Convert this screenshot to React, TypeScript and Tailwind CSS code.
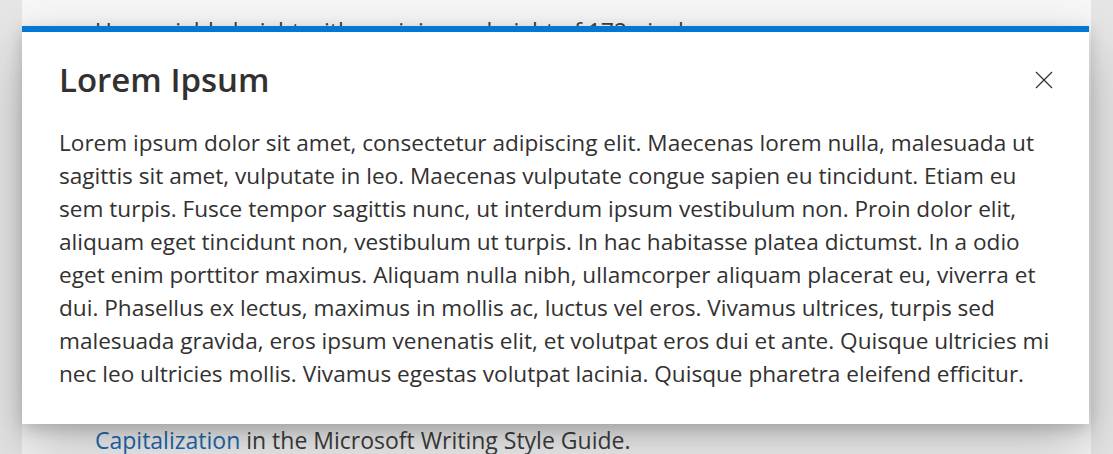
const bodyLines = [
  'Lorem ipsum dolor sit amet, consectetur adipiscing elit. Maecenas lorem nulla, malesuada ut',
  'sagittis sit amet, vulputate in leo. Maecenas vulputate congue sapien eu tincidunt. Etiam eu',
  'sem turpis. Fusce tempor sagittis nunc, ut interdum ipsum vestibulum non. Proin dolor elit,',
  'aliquam eget tincidunt non, vestibulum ut turpis. In hac habitasse platea dictumst. In a odio',
  'eget enim porttitor maximus. Aliquam nulla nibh, ullamcorper aliquam placerat eu, viverra et',
  'dui. Phasellus ex lectus, maximus in mollis ac, luctus vel eros. Vivamus ultrices, turpis sed',
  'malesuada gravida, eros ipsum venenatis elit, et volutpat eros dui et ante. Quisque ultricies mi',
  'nec leo ultricies mollis. Vivamus egestas volutpat lacinia. Quisque pharetra eleifend efficitur.',
]

const font = { fontFamily: '"Open Sans", "Noto Sans", Arial, sans-serif' }

export default function App() {
  return (
    <div className="relative w-full h-[454px] overflow-hidden bg-[#e6e6e6] flex" style={font}>
      {/* Page behind the dialog */}
      <div className="mx-[22px] flex-1 bg-[#f7f7f7] flex flex-col justify-between pl-[73px] text-[23px] text-[#3f3f3f]">
        <p className="pt-[14px] leading-[34px] whitespace-nowrap">
          Use variable height with a minimum height of 172 pixels.
        </p>
        <div className="leading-[34px] whitespace-nowrap -mb-[3px]">
          <p>Keep your copy brief and to the point, and for any typography rules, see</p>
          <p>
            <span className="text-[#1f6cb5]">Capitalization</span> in the Microsoft Writing Style Guide.
          </p>
        </div>
      </div>

      {/* Dialog */}
      <div className="absolute left-[22px] top-[26px] w-[1067px] h-[398px] bg-white border-t-[6px] border-[#0078d4] shadow-[0_26px_58px_rgba(0,0,0,0.24),0_5px_15px_rgba(0,0,0,0.18)] text-[#323130]">
        <div className="flex items-start justify-between pl-[37px] pr-[36px] pt-[25px]">
          <h2 className="text-[33px] leading-[46px] font-semibold">Lorem Ipsum</h2>
          <button className="mt-[14px] w-[18px] h-[18px] flex items-center justify-center text-[#323130]">
            <svg width="18" height="18" viewBox="0 0 18 18" fill="none" stroke="currentColor" strokeWidth="1.2">
              <path d="M1 1L17 17M17 1L1 17" />
            </svg>
          </button>
        </div>
        <div className="px-[37px] pt-[23px] text-[22.6px] leading-[33px]">
          {bodyLines.map((line) => (
            <p key={line} className="whitespace-nowrap">
              {line}
            </p>
          ))}
        </div>
      </div>
    </div>
  )
}
